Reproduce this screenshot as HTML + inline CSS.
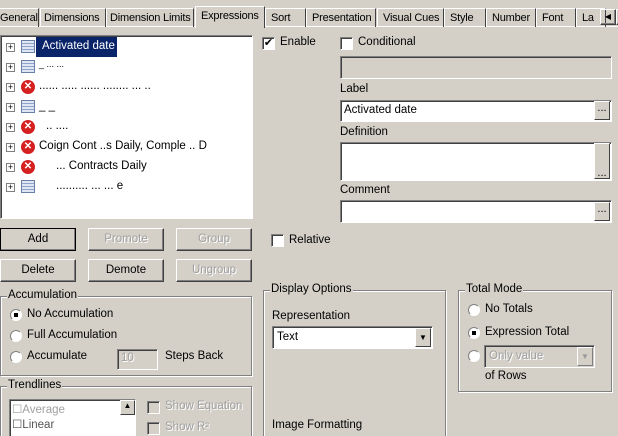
<!DOCTYPE html><html><head><style>
*{box-sizing:border-box;margin:0;padding:0}
html,body{width:618px;height:436px;overflow:hidden}
body{background:#d4d0c8;font:11.5px "Liberation Sans",sans-serif;color:#000;position:relative}
.a{position:absolute;white-space:nowrap}
.tab{position:absolute;top:8px;height:19px;border-left:1px solid #fff;border-top:1px solid #fff;border-right:1px solid #404040;padding:3px 0 0 3px;white-space:nowrap;overflow:hidden;font-size:11px;letter-spacing:-0.2px}
.sunk{position:absolute;background:#fff;border:1px solid;border-color:#808080 #fff #fff #808080;box-shadow:inset 1px 1px 0 #404040}
.btn{position:absolute;height:23px;width:76px;border:1px solid;border-color:#fff #404040 #404040 #fff;box-shadow:inset -1px -1px 0 #808080;text-align:center;line-height:20px}
.dis{color:#a0a0a0;text-shadow:1px 1px 0 #fff}
.cb{position:absolute;width:13px;height:13px;background:#fff;border:1px solid;border-color:#808080 #fff #fff #808080;box-shadow:inset 1px 1px 0 #404040}
.rb{position:absolute;width:12px;height:12px;border-radius:50%;background:#fff;border:1px solid;border-color:#808080 #fff #fff #808080}
.grp{position:absolute;border:1px solid #808080;box-shadow:1px 1px 0 #fff,inset 1px 1px 0 #fff}
.gl{position:absolute;top:-8px;left:6px;background:#d4d0c8;padding:0 1px;white-space:nowrap}
.ell{position:absolute;right:1px;bottom:1px;width:16px;height:19px;background:#d4d0c8;border:1px solid;border-color:#fff #404040 #404040 #fff;font-size:11px;text-align:center;line-height:12px}
.pl{position:absolute;left:5px;width:9px;height:9px;border:1px solid #808080;background:#fff;font-size:9px;line-height:7px;text-align:center}
.gi{position:absolute;left:20px;width:14px;height:13px;border:1px solid #6a7fa8;background:repeating-linear-gradient(#dfe6f3 0 2px,#8fa3c8 2px 3px)}
.xi{position:absolute;left:20px;width:14px;height:14px;border-radius:50%;background:#d42020;color:#fff;font-size:10px;font-weight:bold;text-align:center;line-height:14px}
.tt{position:absolute;left:38px;color:#000;white-space:nowrap}
</style></head><body>
<div class="a" style="left:0;top:26px;width:618px;height:1px;background:#fff"></div>
<div class="tab" style="left:-4px;width:43px">General</div>
<div class="tab" style="left:40px;width:66px">Dimensions</div>
<div class="tab" style="left:106px;width:88px">Dimension Limits</div>
<div class="tab" style="left:195px;top:6px;height:22px;width:70px;background:#d4d0c8;padding-left:5px">Expressions</div>
<div class="tab" style="left:265px;width:41px;padding-left:5px">Sort</div>
<div class="tab" style="left:306px;width:70px;padding-left:5px">Presentation</div>
<div class="tab" style="left:377px;width:67px;padding-left:5px">Visual Cues</div>
<div class="tab" style="left:444px;width:42px;padding-left:5px">Style</div>
<div class="tab" style="left:486px;width:50px;padding-left:5px">Number</div>
<div class="tab" style="left:536px;width:40px;padding-left:5px">Font</div>
<div class="tab" style="left:576px;width:30px;padding-left:5px">La</div>
<div class="btn" style="left:600px;top:9px;width:16px;height:16px;font-size:8px;line-height:13px">◀</div>
<div class="btn" style="left:616px;top:9px;width:16px;height:16px"></div>

<div class="sunk" style="left:0;top:35px;width:253px;height:184px">
<div class="a" style="left:35px;top:1px;width:81px;height:20px;background:#0a246a"></div>
<div class="tt" style="left:41px;top:4px;color:#fff">Activated date</div>
<div class="pl" style="top:7px">+</div><div class="gi" style="top:4px"></div>
<div class="pl" style="top:27px">+</div><div class="gi" style="top:24px"></div><div class="tt" style="top:23px;font-size:9px">_ ... ...</div>
<div class="pl" style="top:47px">+</div><div class="xi" style="top:44px">✕</div><div class="tt" style="top:44px">...... ..... ...... ........ ... ..</div>
<div class="pl" style="top:67px">+</div><div class="gi" style="top:64px"></div><div class="tt" style="top:64px">_ _</div>
<div class="pl" style="top:87px">+</div><div class="xi" style="top:84px">✕</div><div class="tt" style="top:84px;left:45px">.. ....</div>
<div class="pl" style="top:107px">+</div><div class="xi" style="top:104px">✕</div><div class="tt" style="top:104px">Coign Cont ..s Daily, Comple .. D</div>
<div class="pl" style="top:127px">+</div><div class="xi" style="top:124px">✕</div><div class="tt" style="top:124px;left:55px">... Contracts Daily</div>
<div class="pl" style="top:147px">+</div><div class="gi" style="top:144px"></div><div class="tt" style="top:144px;left:55px">.......... ... ... e</div>
</div>

<div class="btn" style="left:0;top:228px;outline:1px solid #000;outline-offset:-1px">Add</div>
<div class="btn dis" style="left:88px;top:228px">Promote</div>
<div class="btn dis" style="left:176px;top:228px">Group</div>
<div class="btn" style="left:0;top:259px">Delete</div>
<div class="btn" style="left:88px;top:259px">Demote</div>
<div class="btn dis" style="left:176px;top:259px">Ungroup</div>

<div class="grp" style="left:0;top:296px;width:252px;height:80px"><span class="gl">Accumulation</span>
<div class="rb" style="left:9px;top:12px"><div class="a" style="left:3px;top:3px;width:4px;height:4px;background:#000"></div></div><div class="a" style="left:26px;top:11px">No Accumulation</div>
<div class="rb" style="left:9px;top:33px"></div><div class="a" style="left:26px;top:32px">Full Accumulation</div>
<div class="rb" style="left:9px;top:54px"></div><div class="a" style="left:26px;top:53px">Accumulate</div>
<div class="sunk" style="left:116px;top:52px;width:41px;height:21px;background:#d4d0c8"><span class="a dis" style="left:3px;top:2px">10</span></div>
<div class="a" style="left:164px;top:53px">Steps Back</div>
</div>
<div class="grp" style="left:0;top:386px;width:252px;height:60px"><span class="gl">Trendlines</span>
<div class="sunk" style="left:8px;top:12px;width:127px;height:50px">
<div class="a dis" style="left:2px;top:2px">☐Average</div><div class="a" style="left:2px;top:17px;color:#555">☐Linear</div>
<div class="a" style="right:0;top:0;width:15px;height:15px;background:#d4d0c8;font-size:8px;text-align:center;border:1px solid #fff;border-right-color:#404040;border-bottom-color:#404040">▲</div></div>
<div class="cb" style="left:146px;top:14px;background:#d4d0c8"></div><div class="a dis" style="left:164px;top:13px">Show Equation</div>
<div class="cb" style="left:146px;top:35px;background:#d4d0c8"></div><div class="a dis" style="left:164px;top:34px">Show R²</div>
</div>

<div class="cb" style="left:262px;top:37px;font-size:11px;line-height:10px;text-align:center">✔</div><div class="a" style="left:280px;top:36px">Enable</div>
<div class="cb" style="left:340px;top:37px"></div><div class="a" style="left:358px;top:36px">Conditional</div>
<div class="sunk" style="left:340px;top:56px;width:272px;height:23px;background:#d4d0c8"></div>
<div class="a" style="left:340px;top:83px">Label</div>
<div class="sunk" style="left:340px;top:100px;width:272px;height:22px"><span class="a" style="left:3px;top:3px">Activated date</span><div class="ell">...</div></div>
<div class="a" style="left:340px;top:126px">Definition</div>
<div class="sunk" style="left:340px;top:142px;width:272px;height:39px"><div class="ell" style="height:36px;line-height:58px">...</div></div>
<div class="a" style="left:340px;top:184px">Comment</div>
<div class="sunk" style="left:340px;top:200px;width:272px;height:23px"><div class="ell">...</div></div>
<div class="cb" style="left:271px;top:234px"></div><div class="a" style="left:289px;top:234px">Relative</div>

<div class="grp" style="left:263px;top:290px;width:183px;height:160px"><span class="gl">Display Options</span>
<div class="a" style="left:8px;top:19px">Representation</div>
<div class="sunk" style="left:8px;top:35px;width:161px;height:23px"><span class="a" style="left:4px;top:4px">Text</span>
<div class="a" style="right:1px;top:1px;width:16px;height:19px;background:#d4d0c8;border:1px solid;border-color:#fff #404040 #404040 #fff;font-size:8px;text-align:center;line-height:17px">▼</div></div>
<div class="a" style="left:8px;top:128px">Image Formatting</div>
</div>
<div class="grp" style="left:458px;top:290px;width:154px;height:102px"><span class="gl">Total Mode</span>
<div class="rb" style="left:9px;top:13px"></div><div class="a" style="left:26px;top:12px">No Totals</div>
<div class="rb" style="left:9px;top:36px"><div class="a" style="left:3px;top:3px;width:4px;height:4px;background:#000"></div></div><div class="a" style="left:26px;top:35px">Expression Total</div>
<div class="rb" style="left:9px;top:59px"></div>
<div class="sunk" style="left:25px;top:54px;width:111px;height:23px;background:#d4d0c8"><span class="a dis" style="left:4px;top:4px">Only value</span>
<div class="a" style="right:1px;top:1px;width:16px;height:19px;border:1px solid;border-color:#fff #808080 #808080 #fff;font-size:8px;color:#999;text-align:center;line-height:17px">▼</div></div>
<div class="a" style="left:26px;top:79px">of Rows</div>
</div>
</body></html>
